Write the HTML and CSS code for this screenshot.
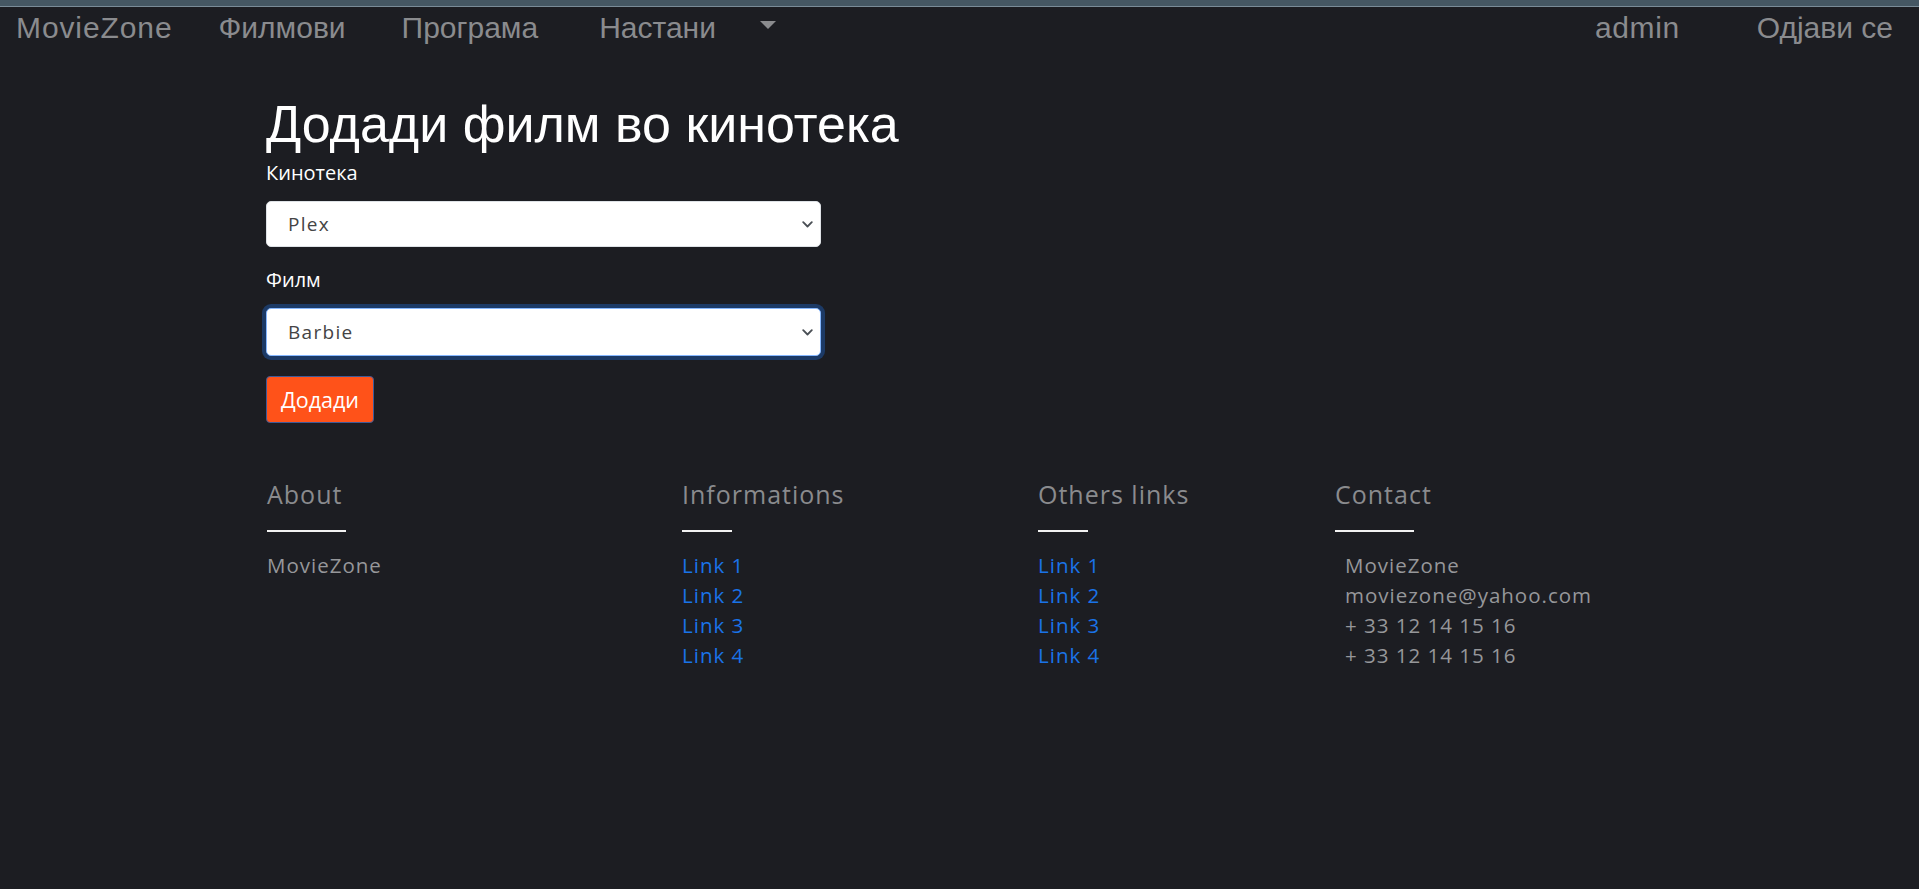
FILE: index.html
```html
<!DOCTYPE html>
<html lang="mk">
<head>
<meta charset="utf-8">
<title>MovieZone</title>
<link rel="stylesheet" href="styles.css">
</head>
<body>
<div class="topstrip"></div>
<nav class="navbar">
  <div class="nav-left">
    <a class="brand" href="#">MovieZone</a>
    <a class="nav-link l1" href="#">Филмови</a>
    <a class="nav-link l2" href="#">Програма</a>
    <a class="nav-link l3" href="#">Настани</a>
    <span class="caret"></span>
  </div>
  <div class="nav-right">
    <a class="nav-link r1" href="#">admin</a>
    <a class="nav-link r2" href="#">Одјави се</a>
  </div>
</nav>

<main class="content">
  <h1 class="title">Додади филм во кинотека</h1>
  <form class="form">
    <label class="label">Кинотека</label>
    <div class="select">
      <span class="select-value">Plex</span>
      <svg class="chev" width="11" height="7" viewBox="0 0 11 7"><path d="M1.2 1.2 L5.5 5.5 L9.8 1.2" fill="none" stroke="#4a4f55" stroke-width="1.8" stroke-linecap="round" stroke-linejoin="round"/></svg>
    </div>
    <label class="label label2">Филм</label>
    <div class="select focused">
      <span class="select-value">Barbie</span>
      <svg class="chev" width="11" height="7" viewBox="0 0 11 7"><path d="M1.2 1.2 L5.5 5.5 L9.8 1.2" fill="none" stroke="#4a4f55" stroke-width="1.8" stroke-linecap="round" stroke-linejoin="round"/></svg>
    </div>
    <button type="button" class="btn">Додади</button>
  </form>
</main>

<footer class="footer">
  <div class="fcol">
    <h5 class="fhead">About</h5>
    <div class="fline w80"></div>
    <ul class="flist"><li class="ftext">MovieZone</li></ul>
  </div>
  <div class="fcol">
    <h5 class="fhead">Informations</h5>
    <div class="fline w50"></div>
    <ul class="flist">
      <li><a href="#">Link 1</a></li>
      <li><a href="#">Link 2</a></li>
      <li><a href="#">Link 3</a></li>
      <li><a href="#">Link 4</a></li>
    </ul>
  </div>
  <div class="fcol">
    <h5 class="fhead">Others links</h5>
    <div class="fline w50"></div>
    <ul class="flist">
      <li><a href="#">Link 1</a></li>
      <li><a href="#">Link 2</a></li>
      <li><a href="#">Link 3</a></li>
      <li><a href="#">Link 4</a></li>
    </ul>
  </div>
  <div class="fcol">
    <h5 class="fhead">Contact</h5>
    <div class="fline w80"></div>
    <ul class="flist contact">
      <li class="ftext">MovieZone</li>
      <li class="ftext">moviezone@yahoo.com</li>
      <li class="ftext">+ 33 12 14 15 16</li>
      <li class="ftext">+ 33 12 14 15 16</li>
    </ul>
  </div>
</footer>
</body>
</html>
```

FILE: styles.css
```css
* { box-sizing: border-box; }
html, body { margin: 0; padding: 0; }
body {
  background: #1c1d22;
  width: 1919px;
  height: 889px;
  overflow: hidden;
  font-family: "Liberation Sans", Arial, sans-serif;
  color: #fff;
}
a { text-decoration: none; }

.topstrip {
  height: 7px;
  background: #455763;
  border-bottom: 1px solid #7a8c98;
}

.navbar {
  height: 42px;
  display: flex;
  justify-content: space-between;
  align-items: center;
  padding: 0 26px 0 16px;
}
.nav-left, .nav-right { display: flex; align-items: center; }
.brand, .nav-link {
  color: #8a8b8e;
  font-size: 30px;
  line-height: 1;
}
.brand { margin-right: 46px; letter-spacing: 0.9px; }
.l1 { margin-right: 56px; }
.l2 { margin-right: 61px; }
.l3 { margin-right: 44px; }
.caret {
  width: 0; height: 0;
  border-left: 8.5px solid transparent;
  border-right: 8.5px solid transparent;
  border-top: 8px solid #8a8b8e;
  margin-top: -6px;
}
.r1 { margin-right: 77px; letter-spacing: 0.6px; }

.content {
  padding-left: 266px;
  padding-top: 44px;
}
.title {
  margin: 0;
  font-weight: 400;
  font-size: 52px;
  line-height: 62px;
  color: #fff;
}
.form { display: flex; flex-direction: column; align-items: flex-start; }
.label {
  margin-top: 5px;
  font-family: "Open Sans", sans-serif;
  font-weight: 500;
  font-size: 20px;
  line-height: 26px;
  color: #fff;
}
.label2 { margin-top: 20px; }
.select {
  margin-top: 15px;
  width: 555px;
  height: 46px;
  background: #fff;
  border: 1px solid #dee2e6;
  border-radius: 5px;
  display: flex;
  align-items: center;
  justify-content: space-between;
  padding: 0 7px 0 21px;
}
.select.focused {
  border-color: #86b7fe;
  box-shadow: 0 0 0 4px #1c3a66;
  height: 48px;
}
.select-value {
  font-family: "Open Sans", sans-serif;
  font-size: 19px;
  letter-spacing: 1.3px;
  color: #444;
}
.btn {
  margin-top: 20px;
  height: 47px;
  padding: 0 14px;
  background: #ff5219;
  border: 1.5px solid #3d5a99;
  border-radius: 4px;
  color: #fff;
  font-family: "Open Sans", sans-serif;
  font-size: 21.5px;
  cursor: pointer;
}

.footer {
  margin-top: 56px;
  padding-left: 267px;
  display: grid;
  grid-template-columns: 415px 356px 297px auto;
  font-family: "Open Sans", sans-serif;
  letter-spacing: 1px;
}
.fhead {
  margin: 0;
  font-weight: 400;
  font-size: 25px;
  line-height: 30px;
  color: #8a8b8e;
}
.fline {
  margin-top: 21px;
  height: 2px;
  background: #f2f2f2;
}
.w80 { width: 79px; }
.w50 { width: 50px; }
.flist {
  list-style: none;
  margin: 18px 0 0;
  padding: 0;
  font-size: 20.5px;
  line-height: 30px;
}
.flist a { color: #1a73e8; }
.ftext { color: #96979a; }
.contact { padding-left: 10px; }
```
